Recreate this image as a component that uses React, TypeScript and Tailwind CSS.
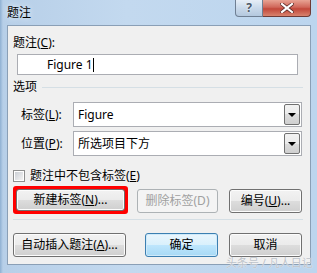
const btn =
  "flex items-center justify-center rounded-[3px] border border-[#707070] bg-[linear-gradient(to_bottom,#f2f2f2_0%,#ebebeb_50%,#dddddd_50%,#cfcfcf_100%)] text-black shadow-[inset_0_0_0_1px_#fcfcfc]";

const Select = ({ value }: { value: string }) => (
  <div className="flex h-[25px] w-[229px] items-center border border-[#abadb3] bg-white pr-[1px]">
    <span className="ml-[4px] flex-1 leading-[14px]">{value}</span>
    <div className="flex h-[21px] w-[16px] items-center justify-center rounded-[2px] border border-[#707070] bg-[linear-gradient(to_bottom,#f2f2f2_0%,#ebebeb_50%,#dddddd_50%,#cfcfcf_100%)]">
      <div className="h-0 w-0 border-x-[4px] border-t-[4px] border-x-transparent border-t-black" />
    </div>
  </div>
);

export default function App() {
  return (
    <div className="relative flex h-[273px] w-[317px] flex-col overflow-hidden bg-[linear-gradient(to_right,#8fb0d2_0px,#b7cfe8_3px,#c3d9ef_40%,#bcd5ee_100%)] font-['Noto_Sans','Noto_Sans_CJK_SC',sans-serif] text-[12px] text-black">
      {/* title bar */}
      <div className="flex h-[25px] items-start justify-between">
        <span className="ml-[7px] mt-[5px] leading-[16px] [text-shadow:0_0_6px_#fff]">题注</span>
        <div className="mr-[6px] flex">
          <div className="flex h-[17px] w-[28px] items-center justify-center rounded-bl-[4px] border border-t-0 border-[#6f7f93] bg-[linear-gradient(to_bottom,#e6eef7,#c9d9ea_50%,#b4c8de)] text-[12px] font-bold leading-none text-[#4a5868] [text-shadow:0_0_2px_#fff]">
            ?
          </div>
          <div className="flex h-[17px] w-[48px] items-center justify-center rounded-br-[4px] border border-l-0 border-t-0 border-[#6e3a36] bg-[linear-gradient(to_bottom,#e8a394,#d0675a_45%,#c2473a_55%,#d8836e)]">
            <svg width="14" height="10" viewBox="0 0 14 10">
              <path d="M2 1 L12 9 M12 1 L2 9" stroke="#5a2a26" strokeWidth="3.6" strokeLinecap="square" />
              <path d="M2 1 L12 9 M12 1 L2 9" stroke="#fff" strokeWidth="2.2" strokeLinecap="square" />
            </svg>
          </div>
        </div>
      </div>

      {/* client area */}
      <div className="mb-[8px] ml-[7px] mr-[6px] flex flex-1 flex-col border border-[#8a9fb6] bg-[#f0f0f0] pl-[5px] pr-[7px]">
        <div className="mt-[10px] h-[14px] leading-[14px]">
          题注(<u>C</u>):
        </div>
        <div className="ml-[4px] mt-[4px] flex h-[21px] w-[281px] items-center border border-[#abadb3] bg-white">
          <span className="ml-[29px] leading-[14px]">Figure 1</span>
          <span className="h-[14px] w-px bg-black" />
        </div>

        <div className="mt-[5px] flex h-[14px] items-center">
          <span className="leading-[14px]">选项</span>
          <div className="ml-[5px] h-px flex-1 bg-[#d5dfe5]" />
        </div>

        <div className="mt-[8px] flex items-center">
          <span className="ml-[8px] w-[52px] leading-[14px]">
            标签(<u>L</u>):
          </span>
          <Select value="Figure" />
        </div>
        <div className="mt-[4px] flex items-center">
          <span className="ml-[8px] w-[52px] leading-[14px]">
            位置(<u>P</u>):
          </span>
          <Select value="所选项目下方" />
        </div>

        <div className="mt-[13px] flex h-[14px] items-center">
          <div className="h-[12px] w-[12px] border border-[#8e8f8f] bg-white p-px">
            <div className="h-full w-full bg-[linear-gradient(135deg,#cbcfd5,#f4f4f4)]" />
          </div>
          <span className="ml-[5px] leading-[14px]">
            题注中不包含标签(<u>E</u>)
          </span>
        </div>

        <div className="mt-[3px] flex items-start">
          <div className="h-[28px] w-[115px] rounded-[3px] border-[3px] border-[#ff0000] bg-[#ff0000]">
            <div className={`${btn} h-full w-full`}>
              新建标签(<u>N</u>)...
            </div>
          </div>
          <div className="ml-[9px] mt-[3px] flex h-[24px] w-[81px] items-center justify-center rounded-[3px] border border-[#adb2b5] bg-[#f4f4f4] text-[#a0a0a0]">
            删除标签(D)
          </div>
          <div className={`${btn} ml-[11px] mt-[3px] h-[24px] w-[73px]`}>
            编号(<u>U</u>)...
          </div>
        </div>

        <div className="mt-[5px] h-px bg-[#d5dfe5]" />

        <div className="mt-[13px] flex">
          <div className={`${btn} h-[24px] w-[113px]`}>
            自动插入题注(<u>A</u>)...
          </div>
          <div className="ml-[19px] flex h-[24px] w-[73px] items-center justify-center rounded-[3px] border border-[#3c7fb1] bg-[linear-gradient(to_bottom,#eaf6fd_0%,#d9f0fc_50%,#bee6fd_50%,#a7d9f5_100%)] shadow-[inset_0_0_0_1px_#cfeafa]">
            确定
          </div>
          <div className={`${btn} ml-[11px] h-[24px] w-[73px]`}>取消</div>
        </div>
      </div>

      {/* watermark */}
      <span className="absolute left-[226px] top-[256px] whitespace-nowrap text-[11px] leading-[14px] text-[#bcc2c9] [text-shadow:0_0_1px_#fff]">
        头条号 / 凡人日记
      </span>
    </div>
  );
}
